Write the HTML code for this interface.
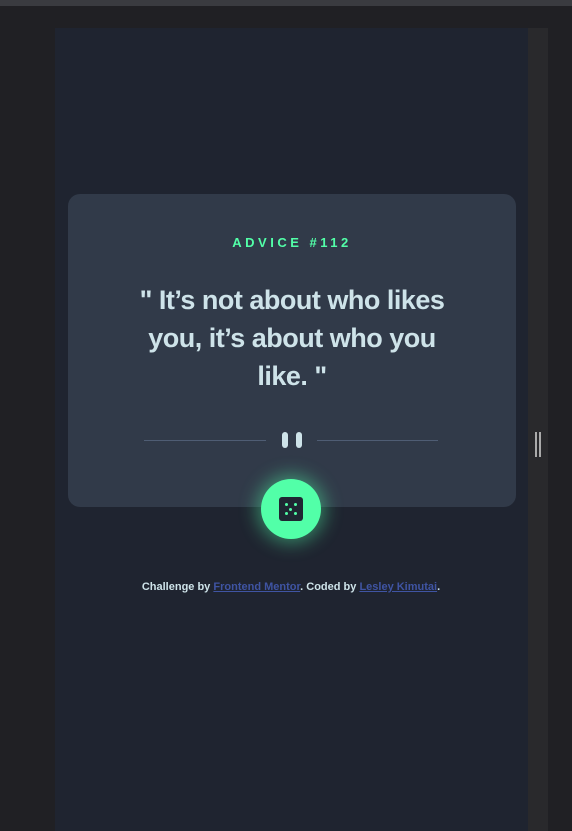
<!DOCTYPE html>
<html><head><style>
body{margin:0;width:572px;height:831px;background:#202024;position:relative;overflow:hidden;font-family:"Liberation Sans",sans-serif}
.top{position:absolute;left:0;top:0;width:572px;height:6px;background:#3a3b40}
.page{position:absolute;left:55px;top:28px;width:473px;height:803px;background:#1f2430}
.strip{position:absolute;left:528px;top:28px;width:20px;height:803px;background:#29292c}
.grip{position:absolute;top:432px;width:2px;height:25px;background:#aaa}
.card{position:absolute;left:68px;top:194px;width:448px;height:313px;background:#313a49;border-radius:12px}
.adv{position:absolute;left:0;width:448px;top:41px;text-align:center;color:#52ffa8;font-size:13px;font-weight:bold;letter-spacing:3.5px}
.q{position:absolute;left:60px;width:328px;top:87px;text-align:center;color:#cee3e9;font-size:27px;font-weight:bold;line-height:38px;letter-spacing:-0.5px}
.ln{position:absolute;top:246px;height:1px;background:#4f5d74}
.bar{position:absolute;top:238px;width:6px;height:16px;border-radius:3px;background:#cee3e9}
.btn{position:absolute;left:261px;top:479px;width:60px;height:60px;border-radius:50%;background:#52ffa8;box-shadow:0 0 18px 4px rgba(82,255,168,.45)}
.die{position:absolute;left:18px;top:18px;width:24px;height:24px;border-radius:3px;background:#1f2632}
.d{position:absolute;width:3px;height:3px;border-radius:50%;background:#52ffa8}
.f{position:absolute;left:0;width:582px;top:581px;text-align:center;color:#cee3e9;font-size:11px;font-weight:bold}
.f a{color:#3f54a3;text-decoration:underline}
</style></head><body>
<div class="top"></div>
<div class="page"></div>
<div class="strip"></div>
<div class="grip" style="left:535px"></div><div class="grip" style="left:539px"></div>
<div class="card">
<div class="adv">ADVICE #112</div>
<div class="q">" It’s not about who likes you, it’s about who you like. "</div>
<div class="ln" style="left:76px;width:122px"></div>
<div class="ln" style="left:249px;width:121px"></div>
<div class="bar" style="left:214px"></div><div class="bar" style="left:228px"></div>
</div>
<div class="btn"><div class="die">
<div class="d" style="left:6px;top:6px"></div><div class="d" style="left:15px;top:6px"></div>
<div class="d" style="left:10px;top:11px"></div>
<div class="d" style="left:6px;top:15px"></div><div class="d" style="left:15px;top:15px"></div>
</div></div>
<div class="f">Challenge by <a>Frontend Mentor</a>. Coded by <a>Lesley Kimutai</a>.</div>
</body></html>
